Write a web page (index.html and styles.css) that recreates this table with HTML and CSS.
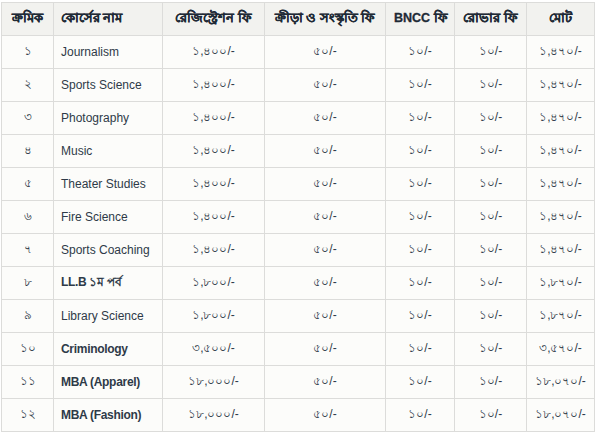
FILE: index.html
```html
<!DOCTYPE html>
<html lang="bn">
<head>
<meta charset="utf-8">
<link rel="stylesheet" href="styles.css">
</head>
<body>
<div class="wrap">
<table class="fees">
<colgroup>
<col class="c-sl"><col class="c-name"><col class="c-reg"><col class="c-sport"><col class="c-bncc"><col class="c-rover"><col class="c-total">
</colgroup>
<thead>
<tr><th>ক্রমিক</th><th class="left">কোর্সের নাম</th><th>রেজিস্ট্রেশন ফি</th><th>ক্রীড়া ও সংস্কৃতি ফি</th><th>BNCC ফি</th><th>রোভার ফি</th><th>মোট</th></tr>
</thead>
<tbody>
<tr><td>১</td><td class="left">Journalism</td><td>১,৪০০/-</td><td>৫০/-</td><td>১০/-</td><td>১০/-</td><td>১,৪৭০/-</td></tr>
<tr><td>২</td><td class="left">Sports Science</td><td>১,৪০০/-</td><td>৫০/-</td><td>১০/-</td><td>১০/-</td><td>১,৪৭০/-</td></tr>
<tr><td>৩</td><td class="left">Photography</td><td>১,৪০০/-</td><td>৫০/-</td><td>১০/-</td><td>১০/-</td><td>১,৪৭০/-</td></tr>
<tr><td>৪</td><td class="left">Music</td><td>১,৪০০/-</td><td>৫০/-</td><td>১০/-</td><td>১০/-</td><td>১,৪৭০/-</td></tr>
<tr><td>৫</td><td class="left">Theater Studies</td><td>১,৪০০/-</td><td>৫০/-</td><td>১০/-</td><td>১০/-</td><td>১,৪৭০/-</td></tr>
<tr><td>৬</td><td class="left">Fire Science</td><td>১,৪০০/-</td><td>৫০/-</td><td>১০/-</td><td>১০/-</td><td>১,৪৭০/-</td></tr>
<tr><td>৭</td><td class="left">Sports Coaching</td><td>১,৪০০/-</td><td>৫০/-</td><td>১০/-</td><td>১০/-</td><td>১,৪৭০/-</td></tr>
<tr><td>৮</td><td class="left strong">LL.B ১ম পর্ব</td><td>১,৮০০/-</td><td>৫০/-</td><td>১০/-</td><td>১০/-</td><td>১,৮৭০/-</td></tr>
<tr><td>৯</td><td class="left">Library Science</td><td>১,৮০০/-</td><td>৫০/-</td><td>১০/-</td><td>১০/-</td><td>১,৮৭০/-</td></tr>
<tr><td>১০</td><td class="left strong">Criminology</td><td>৩,৫০০/-</td><td>৫০/-</td><td>১০/-</td><td>১০/-</td><td>৩,৫৭০/-</td></tr>
<tr><td>১১</td><td class="left strong">MBA (Apparel)</td><td>১৮,০০০/-</td><td>৫০/-</td><td>১০/-</td><td>১০/-</td><td>১৮,০৭০/-</td></tr>
<tr><td>১২</td><td class="left strong">MBA (Fashion)</td><td>১৮,০০০/-</td><td>৫০/-</td><td>১০/-</td><td>১০/-</td><td>১৮,০৭০/-</td></tr>
</tbody>
</table>
</div>
</body>
</html>
```
FILE: styles.css
```css
html, body { margin: 0; padding: 0; background: #ffffff; }
.wrap { padding: 2px 0 0 1px; }
.fees {
  border-collapse: collapse;
  table-layout: fixed;
  width: 593px;
  font-family: "Liberation Sans", Arial, sans-serif;
  font-size: 12px;
  color: #2e3a48;
  background: #fcfcfa;
}
.c-sl { width: 52px; }
.c-name { width: 109px; }
.c-reg { width: 102px; }
.c-sport { width: 121px; }
.c-bncc { width: 69px; }
.c-rover { width: 72px; }
.c-total { width: 68px; }
.fees th, .fees td {
  border: 1px solid #dcdcda;
  height: 32px;
  padding: 0 8px;
  text-align: center;
  vertical-align: middle;
  white-space: nowrap;
}
.fees th {
  background: #f2f2ef;
  font-weight: bold;
  font-size: 12.5px;
  color: #1f2a36;
  -webkit-text-stroke: 0.3px #1f2a36;
}
.fees .left { text-align: left; padding-left: 7px; }
.fees .strong { font-weight: bold; letter-spacing: -0.3px; }
```
